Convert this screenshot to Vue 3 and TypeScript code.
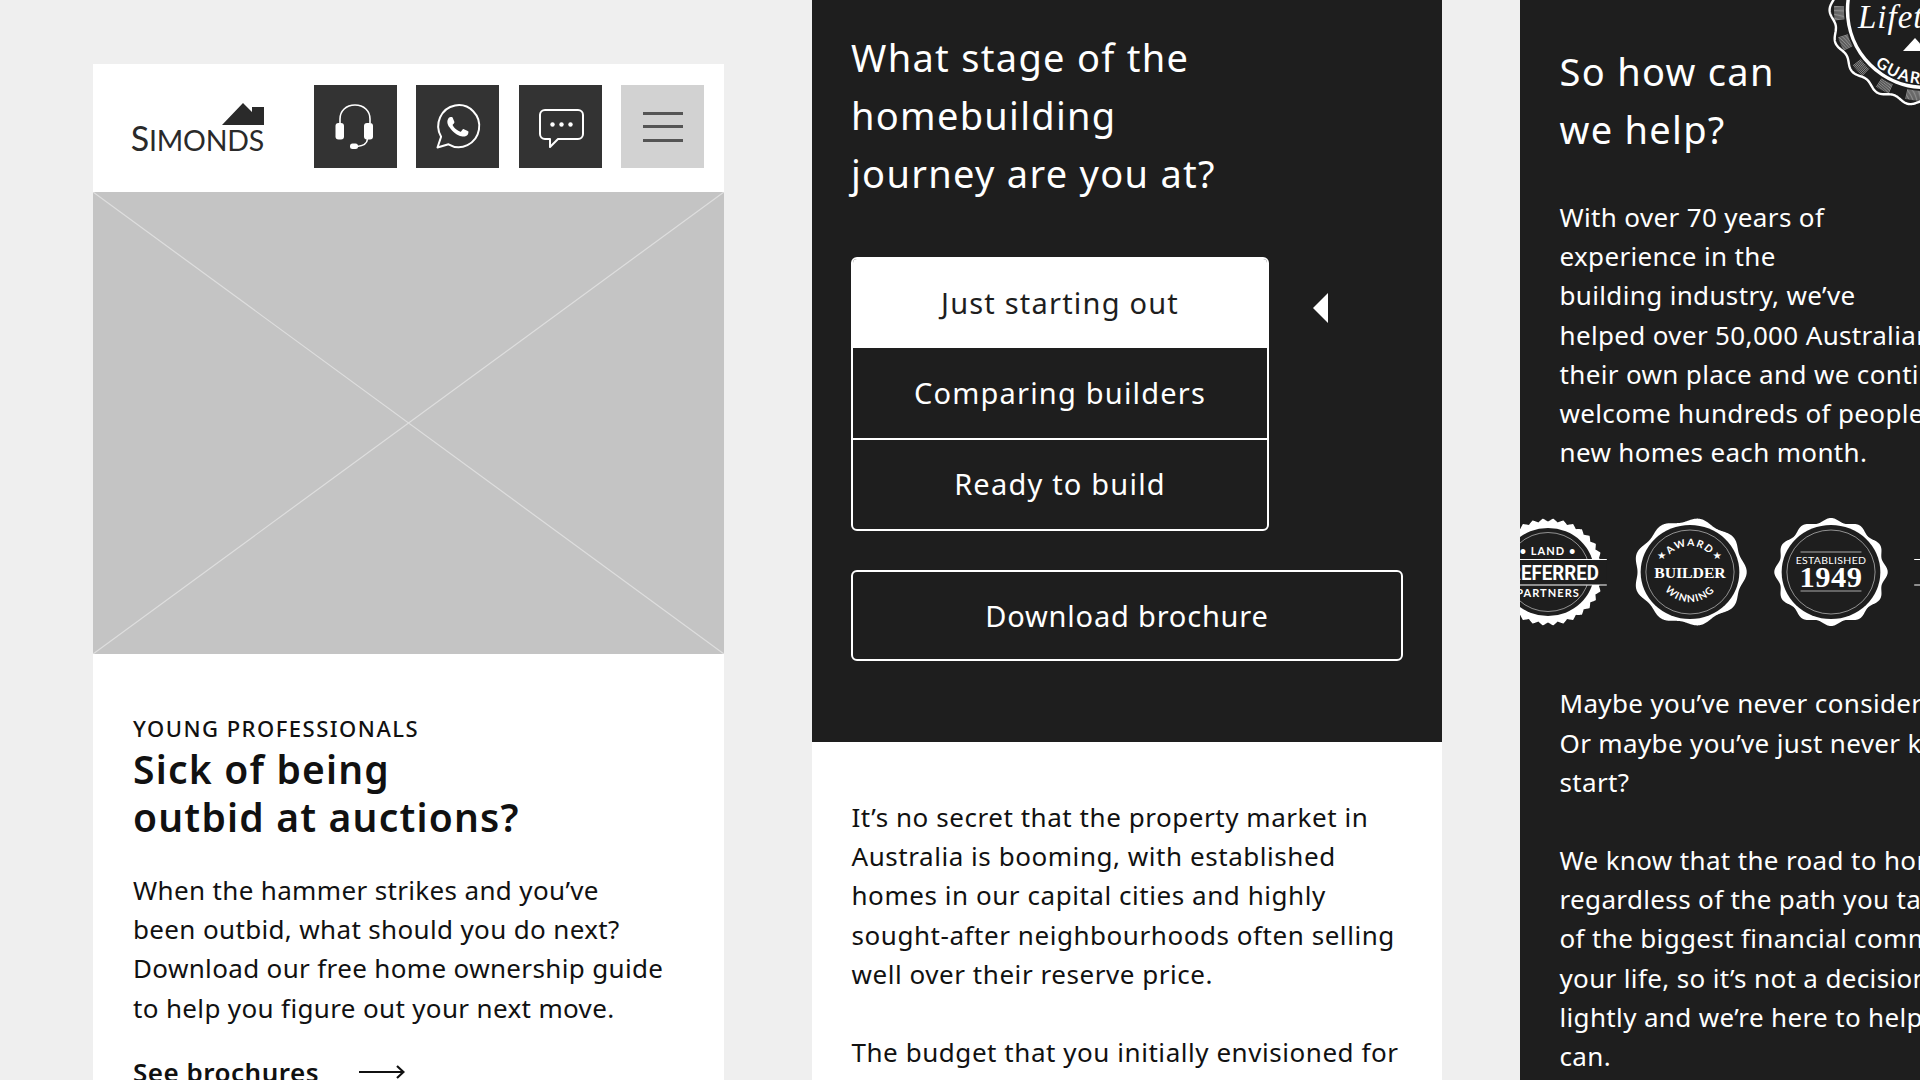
<script setup lang="ts">
const stages = ['Just starting out', 'Comparing builders', 'Ready to build'];

// wavy outline of a seal, r = R + amp * cos(n * angle)
const sealPath = (c: number, R: number, amp: number, n: number, sharp = false): string => {
  const pts: string[] = [];
  for (let i = 0; i < 720; i++) {
    const a = (i / 720) * Math.PI * 2;
    const wave = sharp ? Math.abs(((i / 720) * n) % 1 - 0.5) * 4 - 1 : Math.cos(n * a);
    const r = R + amp * wave;
    pts.push(`${(c + r * Math.cos(a)).toFixed(2)} ${(c + r * Math.sin(a)).toFixed(2)}`);
  }
  return 'M' + pts.join('L') + 'Z';
};

// little hatch groups round the big lifetime seal
const hatchPath = (() => {
  let d = '';
  for (let s = 0; s < 18; s++) {
    for (let k = -5; k <= 5; k++) {
      const a = ((s * 20 + 18 + k * 0.85) * Math.PI) / 180;
      d += `M${(100 + 81 * Math.cos(a)).toFixed(2)} ${(100 + 81 * Math.sin(a)).toFixed(2)}L${(100 + 91 * Math.cos(a)).toFixed(2)} ${(100 + 91 * Math.sin(a)).toFixed(2)}`;
    }
  }
  return d;
})();

const partnerSeal = sealPath(60, 52, 1.6, 34, true);
const builderSeal = sealPath(60, 52, 2, 9);
const estSeal = sealPath(60, 52, 2, 12);
const lifetimeSeal = sealPath(100, 93, 2.4, 18);
</script>

<template>
  <div class="page">
    <!-- first phone -->
    <section class="col col-one">
      <header class="topbar">
        <div class="logo">
          <svg class="roof" width="42" height="22" viewBox="0 0 42 22"><path d="M0 22 21 0l9 9V4h12v18z" fill="#2a2a2a" /></svg>
          <div class="wordmark"><span class="big-s">S</span>IMONDS</div>
        </div>
        <div class="btns">
          <button class="icon-btn">
            <svg width="83" height="83" viewBox="0 0 83 83" fill="none" stroke="#fff" stroke-width="1.6">
              <path d="M26 38v-4c0-8 6-14 15-14s15 6 15 14v4" />
              <rect x="21.5" y="38" width="8.5" height="16.5" rx="3" fill="#fff" stroke="none" />
              <rect x="50" y="38" width="9" height="16.5" rx="3" fill="#fff" stroke="none" />
              <path d="M53.5 54c-.5 5.5-5 7-10.5 7.5" />
              <rect x="36" y="58.5" width="8" height="5.5" rx="2.5" fill="#fff" stroke="none" />
            </svg>
          </button>
          <button class="icon-btn">
            <svg width="83" height="83" viewBox="0 0 83 83" fill="none">
              <path d="M21.5 62.5l3.6-10.7a20.5 21 0 1 1 7.4 7.5z" stroke="#fff" stroke-width="2" stroke-linejoin="round" />
              <path transform="translate(20.8 20.7) scale(1.75)" fill="#fff" d="M17.47 14.38c-.3-.15-1.76-.87-2.03-.97-.27-.1-.47-.15-.67.15-.2.3-.77.97-.94 1.16-.17.2-.35.22-.64.07-.3-.15-1.25-.46-2.39-1.47-.88-.79-1.48-1.76-1.65-2.06-.17-.3-.02-.46.13-.6.13-.14.3-.35.45-.52.15-.18.2-.3.3-.5.1-.2.05-.37-.02-.52-.08-.15-.67-1.61-.92-2.2-.24-.58-.49-.5-.67-.51h-.57c-.2 0-.52.07-.8.37-.27.3-1.04 1.02-1.04 2.48s1.07 2.88 1.21 3.07c.15.2 2.1 3.2 5.08 4.49.71.3 1.26.49 1.7.63.7.22 1.36.19 1.87.11.57-.08 1.76-.72 2-1.41.25-.7.25-1.29.18-1.41-.07-.13-.27-.2-.57-.35z" />
            </svg>
          </button>
          <button class="icon-btn">
            <svg width="83" height="83" viewBox="0 0 83 83" fill="none">
              <path d="M26 25h33a5 5 0 0 1 5 5v19a5 5 0 0 1-5 5H39l-8 8v-8h-5a5 5 0 0 1-5-5V30a5 5 0 0 1 5-5z" stroke="#fff" stroke-width="2" stroke-linejoin="round" />
              <circle cx="33.5" cy="39.5" r="2.2" fill="#fff" />
              <circle cx="42.5" cy="39.5" r="2.2" fill="#fff" />
              <circle cx="51.5" cy="39.5" r="2.2" fill="#fff" />
            </svg>
          </button>
          <button class="icon-btn menu">
            <span></span><span></span><span></span>
          </button>
        </div>
      </header>

      <div class="placeholder">
        <svg width="631" height="462" viewBox="0 0 631 462">
          <path d="M0 0 631 462M631 0 0 462" stroke="#dedede" stroke-width="1.2" />
        </svg>
      </div>

      <div class="card-copy">
        <div class="eyebrow">YOUNG PROFESSIONALS</div>
        <h2 class="card-title">Sick of being<br />outbid at auctions?</h2>
        <p class="copy dark-text">When the hammer strikes and you’ve<br />been outbid, what should you do next?<br />Download our free home ownership guide<br />to help you figure out your next move.</p>
        <a class="more">See brochures
          <svg width="46" height="14" viewBox="0 0 46 14" fill="none" stroke="#111" stroke-width="2.2"><path d="M0 7h44M38 1l6.5 6-6.5 6" /></svg>
        </a>
      </div>
    </section>

    <!-- second phone -->
    <section class="col col-two">
      <div class="dark-panel">
        <h2 class="big-title">What stage of the<br />homebuilding<br />journey are you at?</h2>
        <div class="picker">
          <ul class="stage-list">
            <li v-for="(s, i) in stages" :key="s" :class="{ active: i === 0 }">{{ s }}</li>
          </ul>
          <i class="caret"></i>
        </div>
        <button class="download">Download brochure</button>
      </div>
      <div class="white-panel">
        <p class="copy dark-text">It’s no secret that the property market in<br />Australia is booming, with established<br />homes in our capital cities and highly<br />sought-after neighbourhoods often selling<br />well over their reserve price.</p>
        <p class="copy dark-text gap">The budget that you initially envisioned for</p>
      </div>
    </section>

    <!-- third phone -->
    <section class="col col-three">
      <svg class="lifetime" width="200" height="200" viewBox="0 0 200 200">
        <defs>
          <path id="guar" d="M26 100a74 74 0 0 0 148 0" />
        </defs>
        <path :d="lifetimeSeal" fill="#1e1e1e" stroke="#fff" stroke-width="2.4" />
        <path :d="hatchPath" stroke="#fff" stroke-width=".5" />
        <circle cx="100" cy="100" r="77.5" fill="#1e1e1e" stroke="#fff" stroke-width="3.5" />
        <text x="33" y="118" class="script">Lifetime</text>
        <path d="M78 141l12-13 12 13z" fill="#fff" />
        <text class="guar-text"><textPath href="#guar" startOffset="50%" text-anchor="middle">GUARANTEE</textPath></text>
      </svg>

      <h2 class="big-title short">So how can<br />we help?</h2>
      <p class="copy light-text first">With over 70 years of<br />experience in the<br />building industry, we’ve<br />helped over 50,000 Australians into<br />their own place and we continue to<br />welcome hundreds of people into<br />new homes each month.</p>

      <div class="badges">
        <svg class="badge" width="126" height="120" viewBox="0 0 120 120" preserveAspectRatio="none">
          <path :d="partnerSeal" fill="#fff" />
          <circle cx="60" cy="60" r="44" fill="#1e1e1e" />
          <circle cx="60" cy="60" r="39.5" fill="none" stroke="#fff" stroke-width=".5" />
          <rect x="4" y="47.5" width="112" height="25.5" fill="#1e1e1e" />
          <path d="M4 47.5h112M4 73h112" stroke="#fff" stroke-width="1" />
          <text x="60" y="43" class="b-small">• LAND •</text>
          <text x="60" y="68" class="b-pref" textLength="97" lengthAdjust="spacingAndGlyphs">PREFERRED</text>
          <text x="60" y="85" class="b-small">PARTNERS</text>
        </svg>
        <svg class="badge" width="126" height="120" viewBox="0 0 120 120" preserveAspectRatio="none">
          <defs>
            <path id="awardArc" d="M34 60a26 26 0 0 1 52 0" />
            <path id="winArc" d="M30 60a30 30 0 0 0 60 0" />
          </defs>
          <path :d="builderSeal" fill="#fff" />
          <circle cx="60" cy="60" r="47" fill="#1e1e1e" />
          <circle cx="60" cy="60" r="42" fill="none" stroke="#fff" stroke-width=".5" />
          <text class="b-arc"><textPath href="#awardArc" startOffset="50%" text-anchor="middle">AWARD</textPath></text>
          <text class="b-arc"><textPath href="#winArc" startOffset="50%" text-anchor="middle">WINNING</textPath></text>
          <text x="33" y="47" class="b-star">★</text>
          <text x="86" y="47" class="b-star">★</text>
          <text x="60" y="66" class="b-builder" textLength="68" lengthAdjust="spacing">BUILDER</text>
        </svg>
        <svg class="badge" width="126" height="120" viewBox="0 0 120 120" preserveAspectRatio="none">
          <path :d="estSeal" fill="#fff" />
          <circle cx="60" cy="60" r="47" fill="#1e1e1e" />
          <circle cx="60" cy="60" r="42" fill="none" stroke="#fff" stroke-width=".5" />
          <path d="M31 40h58M31 79h58" stroke="#aaa" stroke-width="1" />
          <text x="60" y="52" class="b-est">ESTABLISHED</text>
          <text x="60" y="75" class="b-year">1949</text>
        </svg>
        <svg class="badge" width="126" height="120" viewBox="0 0 120 120" preserveAspectRatio="none">
          <path d="M4 47.5h112M4 73h112" stroke="#fff" stroke-width="1" />
        </svg>
      </div>

      <p class="copy light-text second">Maybe you’ve never considered building before.<br />Or maybe you’ve just never known where to<br />start?</p>
      <p class="copy light-text gap">We know that the road to home ownership,<br />regardless of the path you take, is one<br />of the biggest financial commitments of<br />your life, so it’s not a decision to make<br />lightly and we’re here to help in any way we<br />can.</p>
    </section>
  </div>
</template>

<style scoped>
.page {
  width: 1920px;
  height: 1080px;
  overflow: hidden;
  background: #efefef;
  display: flex;
  font-family: "Noto Sans", "Open Sans", sans-serif;
  color: #111;
}

.col {
  width: 630px;
  flex-shrink: 0;
}

.col-one {
  width: 631px;
  margin-left: 93px;
  padding-top: 64px;
}

.col-two {
  margin-left: 88px;
}

.col-three {
  margin-left: 78px;
  background: #1e1e1e;
  position: relative;
  overflow: hidden;
  padding: 42px 0 0 39.5px;
  box-sizing: border-box;
}

.topbar {
  height: 128px;
  background: #fff;
  display: flex;
  justify-content: space-between;
  box-sizing: border-box;
  padding: 21px 20px 0 40px;
}

.logo {
  width: 131px;
  display: flex;
  flex-direction: column;
  align-items: flex-end;
  padding-top: 18px;
}

.roof {
  display: block;
}

.wordmark {
  font-family: Lato, sans-serif;
  font-size: 28.5px;
  line-height: 26px;
  color: #2a2a2a;
  letter-spacing: -0.2px;
  white-space: nowrap;
}

.big-s {
  font-size: 34px;
}

.btns {
  display: flex;
  gap: 19.5px;
}

.icon-btn {
  width: 83px;
  height: 83px;
  padding: 0;
  border: 0;
  background: #333;
  display: block;
}

.icon-btn svg {
  display: block;
}

.menu {
  background: #d2d2d2;
  display: flex;
  flex-direction: column;
  align-items: center;
  justify-content: center;
  gap: 10.5px;
}

.menu span {
  width: 40px;
  height: 3px;
  background: #555;
}

.placeholder {
  height: 462px;
  background: #c4c4c4;
}

.placeholder svg {
  display: block;
}

.card-copy {
  background: #fff;
  padding: 61px 40px 0;
  height: 500px;
  box-sizing: border-box;
}

.eyebrow {
  font-size: 22px;
  line-height: 26px;
  font-weight: 500;
  letter-spacing: 1.5px;
}

.card-title {
  margin: 4px 0 0;
  font-size: 39px;
  line-height: 48px;
  font-weight: 600;
  letter-spacing: 1.2px;
}

.copy {
  margin: 0;
  font-size: 26px;
  line-height: 39.2px;
  letter-spacing: 0.35px;
  white-space: nowrap;
}

.card-copy .copy {
  margin-top: 30px;
}

.dark-text {
  color: #111;
}

.light-text {
  color: #fff;
}

.gap {
  margin-top: 39px;
}

.more {
  display: flex;
  align-items: center;
  gap: 40px;
  margin-top: 25px;
  font-size: 26px;
  line-height: 39px;
  font-weight: 600;
  letter-spacing: 0.5px;
}

.dark-panel {
  background: #1e1e1e;
  height: 742px;
  box-sizing: border-box;
  padding: 28px 40px 0 39px;
  color: #fff;
}

.big-title {
  margin: 0;
  font-size: 38px;
  line-height: 58px;
  font-weight: 400;
  letter-spacing: 1.3px;
  color: #fff;
  white-space: nowrap;
}

.picker {
  display: flex;
  margin-top: 55px;
}

.stage-list {
  list-style: none;
  margin: 0;
  padding: 0;
  width: 418px;
  border: 2px solid #fff;
  border-radius: 6px;
  box-sizing: border-box;
  overflow: hidden;
}

.stage-list li {
  height: 90px;
  padding-bottom: 2px;
  box-sizing: border-box;
  display: flex;
  align-items: center;
  justify-content: center;
  font-size: 29px;
  letter-spacing: 1.2px;
}

.stage-list li:first-child {
  height: 89px;
}

.stage-list li:last-child {
  height: 91px;
  border-top: 2px solid #fff;
}

.stage-list li.active {
  background: #fff;
  color: #1e1e1e;
}

.caret {
  width: 0;
  height: 0;
  margin: 36px 0 0 44px;
  border-top: 15px solid transparent;
  border-bottom: 15px solid transparent;
  border-right: 15px solid #fff;
}

.download {
  display: block;
  width: 552px;
  height: 91px;
  margin-top: 39px;
  background: transparent;
  border: 2px solid #fff;
  border-radius: 6px;
  color: #fff;
  font-family: inherit;
  font-size: 29px;
  letter-spacing: 0.8px;
}

.white-panel {
  background: #fff;
  height: 338px;
  padding: 56px 40px 0 39.5px;
  box-sizing: border-box;
}

.white-panel .copy {
  letter-spacing: 0.55px;
}

.first {
  margin-top: 40px;
}

.badges {
  display: flex;
  gap: 15.5px;
  margin: 40px 0 0 -74.5px;
  height: 120px;
  align-items: center;
}

.badge {
  flex-shrink: 0;
  display: block;
}

.second {
  margin-top: 52px;
}

.lifetime {
  position: absolute;
  left: 305px;
  top: -90px;
}

.script {
  font-family: "Liberation Serif", serif;
  font-style: italic;
  font-size: 33px;
  letter-spacing: 1px;
  fill: #fff;
}

.guar-text {
  font-family: Lato, sans-serif;
  font-size: 16px;
  font-weight: 700;
  letter-spacing: 1.5px;
  fill: #fff;
}

.b-small {
  font-family: Lato, sans-serif;
  font-size: 10.5px;
  font-weight: 700;
  letter-spacing: 1px;
  text-anchor: middle;
  fill: #fff;
}

.b-pref {
  font-family: "Liberation Sans Narrow", Roboto, sans-serif;
  font-size: 20px;
  font-weight: 700;
  text-anchor: middle;
  fill: #fff;
}

.b-arc {
  font-family: Lato, sans-serif;
  font-size: 10px;
  letter-spacing: 1.2px;
  font-weight: 700;
  fill: #fff;
}

.b-star {
  font-family: "DejaVu Sans", sans-serif;
  font-size: 10px;
  text-anchor: middle;
  fill: #fff;
}

.b-builder {
  font-family: "Liberation Serif", serif;
  font-size: 15px;
  font-weight: 700;
  text-anchor: middle;
  fill: #fff;
}

.b-est {
  font-family: Lato, sans-serif;
  font-size: 10px;
  letter-spacing: 0.3px;
  text-anchor: middle;
  fill: #fff;
}

.b-year {
  font-family: "Liberation Serif", serif;
  font-size: 29px;
  font-weight: 700;
  letter-spacing: 0.5px;
  text-anchor: middle;
  fill: #fff;
}
</style>

<style>
html, body {
  margin: 0;
  background: #efefef;
  overflow: hidden;
}
</style>
